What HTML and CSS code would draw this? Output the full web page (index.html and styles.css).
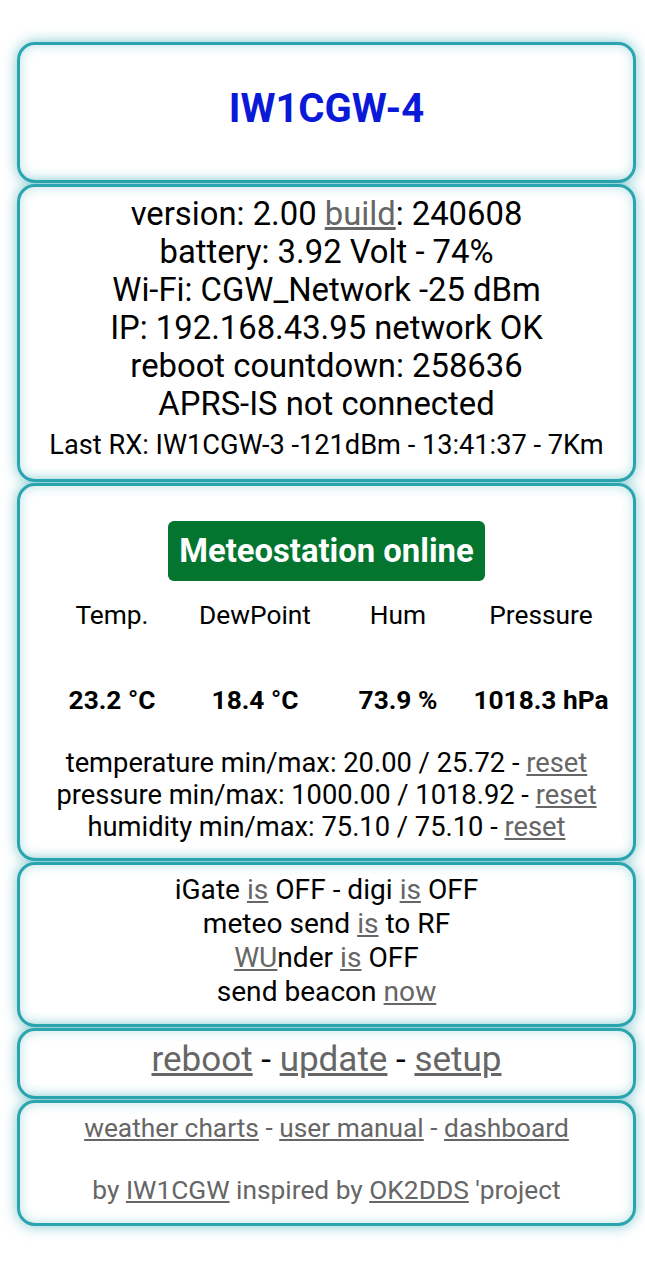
FILE: index.html
```html
<!DOCTYPE html>
<html>
<head>
<meta charset="utf-8">
<link rel="stylesheet" href="styles.css">
</head>
<body>
<main class="page">
  <section class="card card-title">
    <h1 class="call">IW1CGW-4</h1>
  </section>
  <section class="card card-info">
    <div class="big">version: 2.00 <a href="#">build</a>: 240608</div>
    <div class="big">battery: 3.92 Volt - 74%</div>
    <div class="big">Wi-Fi: CGW_Network -25 dBm</div>
    <div class="big">IP: 192.168.43.95 network OK</div>
    <div class="big">reboot countdown: 258636</div>
    <div class="big">APRS-IS not connected</div>
    <div class="small">Last RX: IW1CGW-3 -121dBm - 13:41:37 - 7Km</div>
  </section>
  <section class="card card-meteo">
    <div class="badge">Meteostation online</div>
    <div class="grid heads">
      <div>Temp.</div><div>DewPoint</div><div>Hum</div><div>Pressure</div>
    </div>
    <div class="grid vals">
      <div>23.2 °C</div><div>18.4 °C</div><div>73.9 %</div><div>1018.3 hPa</div>
    </div>
    <div class="minmax">
      <div>temperature min/max: 20.00 / 25.72 - <a href="#">reset</a></div>
      <div>pressure min/max: 1000.00 / 1018.92 - <a href="#">reset</a></div>
      <div>humidity min/max: 75.10 / 75.10 - <a href="#">reset</a></div>
    </div>
  </section>
  <section class="card card-status">
    <div>iGate <a href="#">is</a> OFF - digi <a href="#">is</a> OFF</div>
    <div>meteo send <a href="#">is</a> to RF</div>
    <div><a href="#">WU</a>nder <a href="#">is</a> OFF</div>
    <div>send beacon <a href="#">now</a></div>
  </section>
  <section class="card card-actions">
    <a href="#">reboot</a> - <a href="#">update</a> - <a href="#">setup</a>
  </section>
  <section class="card card-footer">
    <div class="links"><a href="#">weather charts</a> - <a href="#">user manual</a> - <a href="#">dashboard</a></div>
    <div class="credits">by <a href="#">IW1CGW</a> inspired by <a href="#">OK2DDS</a> 'project</div>
  </section>
</main>
</body>
</html>
```

FILE: styles.css
```css
html, body {
  margin: 0;
  padding: 0;
  background: #ffffff;
}
body {
  font-family: Roboto, "Noto Sans", sans-serif;
  color: #000;
}
.page {
  padding: 42px 0 40px 17px;
  width: 619px;
  display: flex;
  flex-direction: column;
  gap: 1px;
}
.card {
  box-sizing: border-box;
  width: 619px;
  border: 3px solid #2aa4af;
  border-radius: 18px;
  background: #fff;
  box-shadow: 0 0 14px rgba(42, 164, 175, 0.6), inset 0 0 12px rgba(42, 164, 175, 0.32);
  text-align: center;
}
a {
  color: #666;
  text-decoration: underline;
}
.card-title {
  height: 141px;
  display: flex;
  align-items: center;
  justify-content: center;
}
.call {
  margin: 0 0 8px 0;
  font-size: 40px;
  font-weight: 700;
  color: #0a18d8;
  line-height: 48px;
}
.card-info {
  padding: 8px 0 17px;
}
.card-info .big {
  font-size: 32.8px;
  line-height: 38px;
}
.card-info .small {
  font-size: 27.2px;
  line-height: 34px;
  margin-top: 5px;
}
.card-meteo {
  padding: 35px 0 15px;
  display: flex;
  flex-direction: column;
  align-items: center;
}
.badge {
  background: #04752f;
  color: #fff;
  font-weight: 700;
  font-size: 32.8px;
  width: 317px;
  height: 60px;
  line-height: 60px;
  border-radius: 6px;
}
.grid {
  display: grid;
  grid-template-columns: repeat(4, 143px);
  font-size: 26.3px;
  line-height: 32px;
}
.heads {
  margin-top: 18px;
}
.vals {
  margin-top: 53px;
  font-weight: 700;
}
.minmax {
  margin-top: 31px;
  font-size: 27.3px;
  line-height: 32px;
}
.card-status {
  padding: 8px 0 15px;
  font-size: 28.1px;
  line-height: 34px;
}
.card-actions {
  padding: 9px 0 16px;
  font-size: 35px;
  line-height: 40px;
}
.card-footer {
  padding: 9px 0 17px;
  font-size: 26.3px;
  line-height: 32px;
  color: #666;
}
.credits {
  margin-top: 30px;
}
```
